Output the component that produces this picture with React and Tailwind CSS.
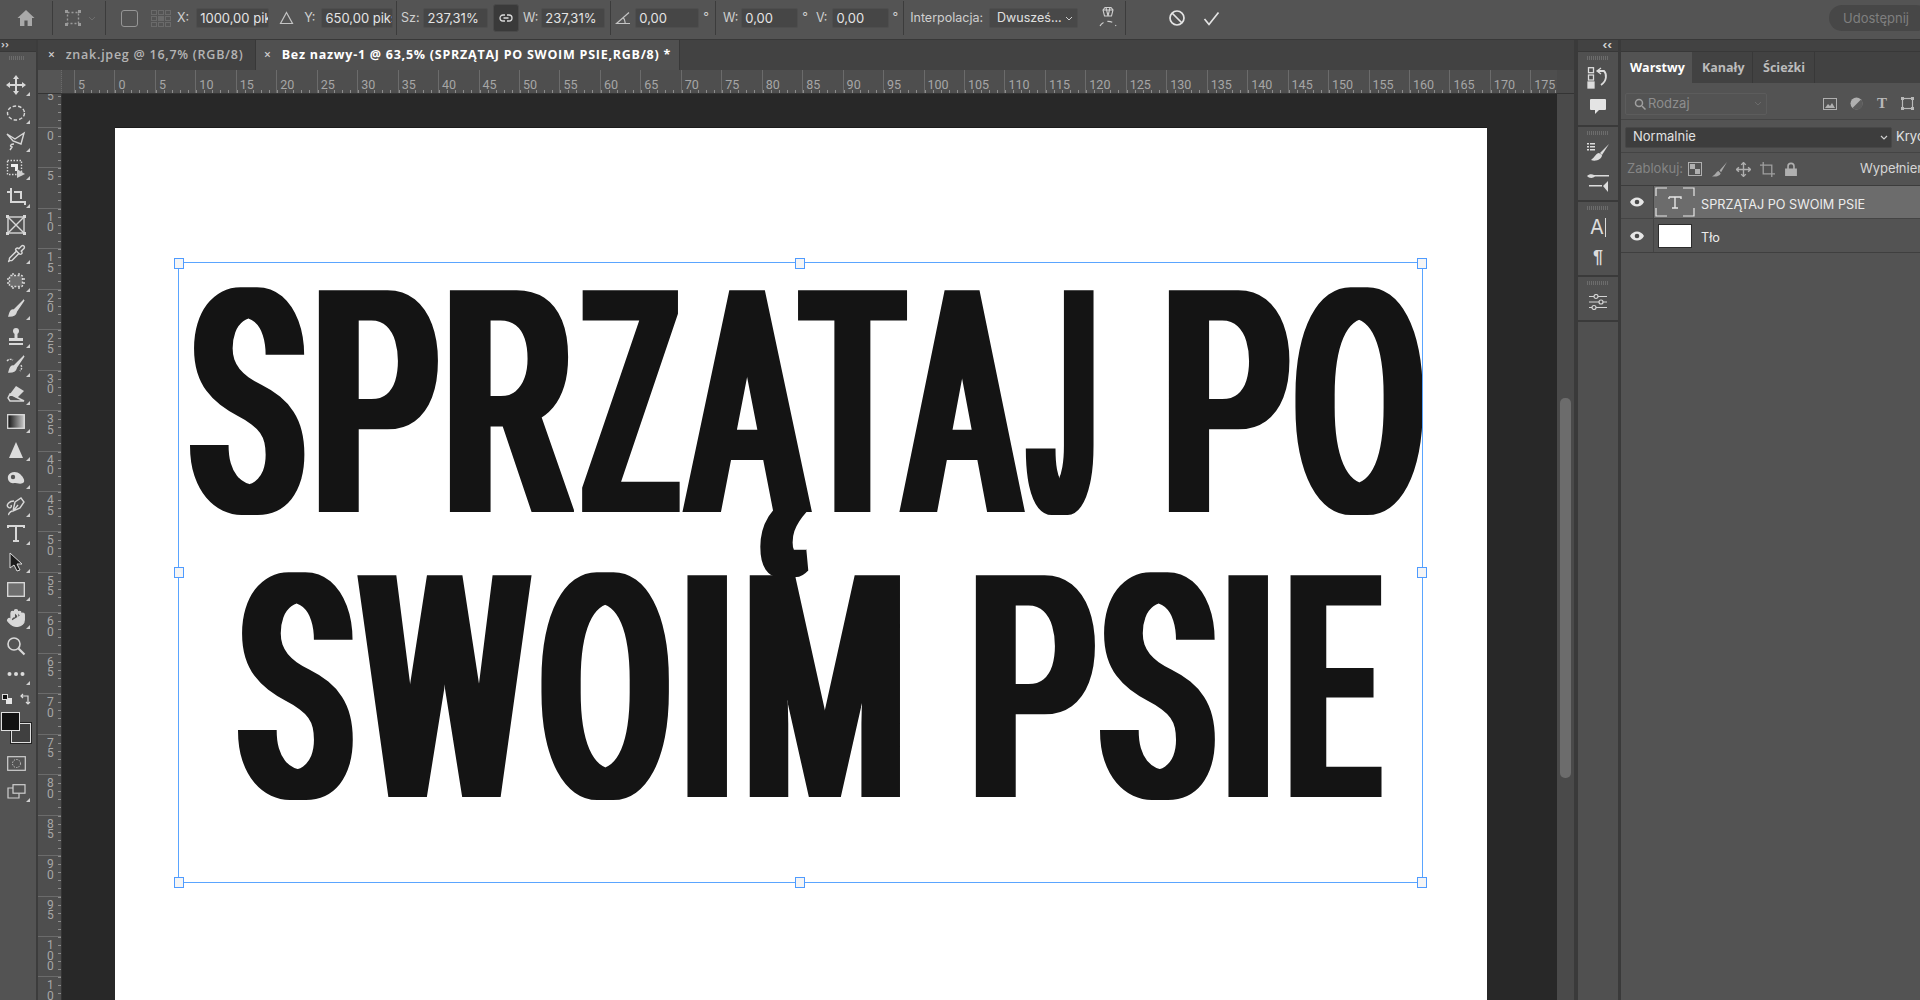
import React from 'react';
import { Hand, Pipette } from 'lucide-react';

const UI = "font-['Inter','Liberation_Sans',sans-serif]";
const C = '#d8d8d8';
const R = 8;

const measure = (() => {
  const ctx = document.createElement('canvas').getContext('2d');
  ctx.font = "500 312px Roboto";
  return (ch) => {
    const m = ctx.measureText(ch);
    return { l: -m.actualBoundingBoxLeft, r: m.actualBoundingBoxRight };
  };
})();

const LINE1 = [['S',189,306],['P',316.5,439],['R',448,574],['Z',581,681],['Ą',681,812,'A'],['T',797,908],['A',898,1025],['J',1025,1095],[' ',1095,1167],['P',1167,1291],['O',1295,1423]];
const LINE2 = [['S',236.6,354],['W',356,534],['O',541.5,669.6],['I',687,727],['M',748,902],[' ',902,974.5],['P',974.5,1097],['S',1099.5,1217],['I',1228,1268],['E',1289,1383]];

function BigLine({ items }) {
  let prev = 115;
  return (
    <div className="flex h-[285px] font-['Roboto',sans-serif] font-medium text-[312px] leading-[285px] text-[#141414] [filter:url(#hfat)]">
      {items.map(([ch, l, r, mc], i) => {
        const ml = l - prev;
        prev = r;
        if (ch === ' ') return <span key={i} className="shrink-0 overflow-hidden whitespace-pre" style={{ width: r - l, marginLeft: ml }}> </span>;
        const m = measure(mc || ch);
        const s = (r - l - 2 * R) / (m.r - m.l);
        return (
          <span key={i} className="shrink-0" style={{ width: r - l, marginLeft: ml }}>
            <span className="inline-block origin-left whitespace-pre" style={{ transform: `translateX(${R}px) scaleX(${s}) translateX(${-m.l}px)` }}>{ch}</span>
          </span>
        );
      })}
    </div>
  );
}

const Svg = ({ s = 20, w, h, children, className = '' }) => (
  <svg width={w || s} height={h || s} viewBox={`0 0 ${w || s} ${h || s}`} fill="none" stroke={C} strokeWidth="1.4" className={className}>{children}</svg>
);

const Sep = ({ cls }) => <div className={`w-px h-[34px] bg-[#3c3c3c] shrink-0 ${cls}`} />;

const Field = ({ w, children }) => (
  <div className={`${w} h-[20px] shrink-0 bg-[#464646] border border-[#4e4e4e] rounded-[2px] pl-[3px] text-[13px] leading-[18px] text-[#e4e4e4] overflow-hidden whitespace-nowrap`}>{children}</div>
);
const Lab = ({ cls = '', children }) => <span className={`text-[12.5px] text-[#cfcfcf] whitespace-nowrap shrink-0 ${cls}`}>{children}</span>;

function TopBar() {
  return (
    <div className="h-[40px] shrink-0 bg-[#545454] border-b border-[#383838] flex items-center relative pb-[3px]">
      <div className="w-[52px] flex justify-center shrink-0">
        <svg width="20" height="20" viewBox="0 0 20 20" fill="#a9a9a9"><path d="M10 2 1.5 10H4v8h4.4v-5.5h3.2V18H16v-8h2.500z" /></svg>
      </div>
      <Sep />
      <div className="w-[52px] flex items-center justify-center gap-[6px] shrink-0 pl-[2px]">
        <Svg s={18}><rect x="3.500" y="3.500" width="11" height="11" strokeDasharray="2 2" stroke="#9a9a9a" /><path d="M1 1h3v3H1zM14 1h3v3h-3zM1 14h3v3H1zM14 14h3v3h-3z" fill="#9a9a9a" stroke="none" /></Svg>
        <svg width="8" height="5" viewBox="0 0 8 5" fill="none" stroke="#6e6e6e"><path d="m1 1 3 3 3-3" /></svg>
      </div>
      <Sep />
      <div className="ml-[15px] w-[17px] h-[17px] border border-[#969696] rounded-[3px] shrink-0" />
      <div className="ml-[13px] grid grid-cols-3 gap-[1px] shrink-0">
        {[...Array(9)].map((_, i) => <span key={i} className={`w-[6px] h-[5px] border border-[#6a6a6a] ${i === 4 ? 'bg-[#6a6a6a]' : ''}`} />)}
      </div>
      <Lab cls="ml-[6px]">X:</Lab>
      <div className="ml-[7px]"><Field w="w-[73px]">1000,00 pik</Field></div>
      <svg className="ml-[10px] shrink-0" width="15" height="14" viewBox="0 0 15 14" fill="none" stroke="#c4c4c4" strokeWidth="1.200"><path d="M7.500 1.500 13.500 12.500h-12z" /></svg>
      <Lab cls="ml-[10px]">Y:</Lab>
      <div className="ml-[6px]"><Field w="w-[72px]">650,00 piks</Field></div>
      <Sep cls="ml-[3px]" />
      <Lab cls="ml-[3.500px]">Sz:</Lab>
      <div className="ml-[4px]"><Field w="w-[65px]">237,31%</Field></div>
      <div className="ml-[5px] w-[26px] h-[28px] shrink-0 bg-[#3a3a3a] border border-[#4a4a4a] rounded-[3px] flex items-center justify-center">
        <svg width="14" height="8" viewBox="0 0 14 8" fill="none" stroke="#dcdcdc" strokeWidth="1.300"><path d="M6 1H4a3 3 0 0 0 0 6h2M8 1h2a3 3 0 0 1 0 6H8M4.500 4h5" /></svg>
      </div>
      <Lab cls="ml-[3.500px]">W:</Lab>
      <div className="ml-[3px]"><Field w="w-[64px]">237,31%</Field></div>
      <Sep cls="ml-[5px]" />
      <svg className="ml-[4px] shrink-0" width="16" height="14" viewBox="0 0 16 14" fill="none" stroke="#c4c4c4" strokeWidth="1.200"><path d="M14 1.500 1.500 12.500H15M8 6.500a7 7 0 0 1 2 6" /></svg>
      <div className="ml-[4px]"><Field w="w-[64px]">0,00</Field></div>
      <Lab cls="ml-[4px]">°</Lab>
      <Sep cls="ml-[6px]" />
      <Lab cls="ml-[7px]">W:</Lab>
      <div className="ml-[3px]"><Field w="w-[57px]">0,00</Field></div>
      <Lab cls="ml-[4px]">°</Lab>
      <Lab cls="ml-[8px]">V:</Lab>
      <div className="ml-[5px]"><Field w="w-[57px]">0,00</Field></div>
      <Lab cls="ml-[3px]">°</Lab>
      <Sep cls="ml-[5px]" />
      <Lab cls="ml-[6px]">Interpolacja:</Lab>
      <div className="ml-[6px] w-[89px] h-[20px] shrink-0 bg-[#484848] border border-[#4e4e4e] rounded-[2px] pl-[7px] text-[12.5px] leading-[18px] text-[#e0e0e0] flex items-center justify-between pr-[4px]">
        <span>Dwusześ...</span>
        <svg width="8" height="5" viewBox="0 0 8 5" fill="none" stroke="#cfcfcf"><path d="m1 1 3 3 3-3" /></svg>
      </div>
      <svg className="ml-[21px] shrink-0" width="18" height="28" viewBox="0 0 18 28" fill="none" stroke="#cfcfcf" strokeWidth="1.100">
        <path d="M4 6l2-2.500h6L14 6l-1.500 6h-7zM4 6h10M7 3.500 9 12l2-8.500" />
        <path d="M1 22a8.500 7 0 0 1 16 0" strokeDasharray="5 4" />
      </svg>
      <Sep cls="ml-[8px]" />
      <svg className="ml-[42px] shrink-0" width="18" height="18" viewBox="0 0 18 18" fill="none" stroke="#e4e4e4" strokeWidth="1.700"><circle cx="9" cy="9" r="7" /><path d="m4 4 10 10" /></svg>
      <svg className="ml-[17px] shrink-0" width="17" height="15" viewBox="0 0 17 15" fill="none" stroke="#e4e4e4" strokeWidth="1.700"><path d="m1.500 8 4.500 5.500L15.500 1.500" /></svg>
      <div className="absolute left-[1829px] top-[5px] w-[100px] h-[26px] rounded-full bg-[#474747] pl-[14px] text-[13px] leading-[26px] text-[#7f7f7f]">Udostępnij</div>
    </div>
  );
}

const T = ({ children, sub = true }) => (
  <div className="relative h-[28.05px] flex items-center justify-center pr-[4px]">
    {children}
    {sub && <svg className="absolute right-[6px] bottom-[3px]" width="4" height="4" viewBox="0 0 4 4" fill="#cfcfcf"><path d="M4 0v4H0z" /></svg>}
  </div>
);

function Tools() {
  return (
    <div className="w-[38px] shrink-0 bg-[#535353] border-r-2 border-[#3c3c3c] flex flex-col">
      <div className="h-[12px] bg-[#3f3f3f] border-b border-[#383838] text-[#d0d0d0] text-[9px] leading-[10px] pl-[1px] font-bold">››</div>
      <div className="h-[19px] flex justify-center pr-[2px] pt-[4px]"><div className="w-[16px] h-[4px] bg-[repeating-linear-gradient(90deg,#6c6c6c_0,#6c6c6c_1px,transparent_1px,transparent_2px)]" /></div>
      <T><Svg><path d="M10 2v16M2 10h16" strokeWidth="2" /><path d="M10 0 7 4h6zM10 20l-3-4h6zM0 10l4-3v6zM20 10l-4-3v6z" fill={C} stroke="none" /></Svg></T>
      <T><Svg><ellipse cx="10" cy="10" rx="8.500" ry="7" strokeDasharray="3.500 2" /></Svg></T>
      <T><Svg><path d="M1 3 9 8l9-6-3 11-8-3L1 3Z" /><path d="M8 13c-3 0-5 2-2 3l-2 3" /></Svg></T>
      <T><Svg><rect x="1.500" y="1.500" width="14" height="14" strokeDasharray="1.500 1.500" /><path d="M5 5h7v7H9V8H5z" fill="#eee" stroke="none" /><path d="m11 10 8 5-8 4z" fill="#cfcfcf" stroke="none" /></Svg></T>
      <T><Svg><path d="M5 1v14h14v3M1 5h4M8 5h7v7" strokeWidth="2" /></Svg></T>
      <T sub={false}><Svg><rect x="2" y="2" width="16" height="16" /><path d="m2 2 16 16M18 2 2 18" /><path d="M0 0h3v3H0zM17 0h3v3h-3zM0 17h3v3H0zM17 17h3v3h-3z" fill={C} stroke="none" /></Svg></T>
      <T><Pipette size={19} color={C} strokeWidth={1.800} /></T>
      <T><Svg><rect x="3.500" y="4.500" width="13" height="11" rx="1" fill="#6d6d6d" strokeDasharray="2 1.500" /><path d="M1 8h2M1 12h2M17 8h2M17 12h2M7 2v2M13 2v2M7 16v2M13 16v2" /></Svg></T>
      <T><Svg><path d="M18 1 8 11l2 2L18 1Z" fill={C} /><path d="M7 11c-3 0-3 3-4 6 3 0 7-1 7-4z" fill={C} /></Svg></T>
      <T><Svg><circle cx="10" cy="4" r="3" fill={C} stroke="none" /><path d="M8.500 6h3v5h-3z" fill={C} stroke="none" /><path d="M3 11h14v3H3zM3 16h14v2H3z" fill={C} stroke="none" /></Svg></T>
      <T><Svg><path d="M18 1 8 11l2 2L18 1Z" fill={C} /><path d="M7 11c-3 0-3 3-4 6 3 0 7-1 7-4z" fill={C} /><path d="M1 6c2-2 4-2 6-1M15 10c1 2 1 4-1 6" strokeDasharray="2 1" /></Svg></T>
      <T><Svg><path d="m10 2 8 5-7 7-7-4z" fill={C} stroke="none" /><path d="m4 10 6 3 8 4H4l-2-3z" /></Svg></T>
      <T><svg width="18" height="15" viewBox="0 0 18 15"><defs><linearGradient id="g"><stop offset="0" stopColor="#111" /><stop offset="1" stopColor="#ccc" /></linearGradient></defs><rect x=".7" y=".7" width="16.600" height="13.600" fill="url(#g)" stroke="#ddd" strokeWidth="1.300" /></svg></T>
      <T><svg width="16" height="16" viewBox="0 0 16 16" fill="#dcdcdc"><path d="M8 0 15 16H1z" /></svg></T>
      <T><svg width="18" height="14" viewBox="0 0 18 14"><path d="M1 5c2-5 9-5 12-2 2 2 5 5 4 8-2 3-7 1-10 1-3 1-7-2-6-7Z" fill="#dcdcdc" /><circle cx="6" cy="6" r="2.200" fill="#545454" /></svg></T>
      <T><Svg><path d="M9 6 15 2l3 4-4 6-7 3zM8 14l4-5" /><path d="M8 5C3 5 0 9 2 11c2 2 4 0 3-2M6 15c-2 1-4 3-3 4" /></Svg></T>
      <T><svg width="18" height="17" viewBox="0 0 18 17" fill="none" stroke={C} strokeWidth="2"><path d="M1 3V1h16v2M9 1v15M6 16h6" /></svg></T>
      <T><svg width="16" height="20" viewBox="0 0 16 20"><path d="M2 1v15l4-3 3 6 3-1-3-6h5z" fill="#1c1c1c" stroke="#dcdcdc" strokeWidth="1" /></svg></T>
      <T><svg width="18" height="15" viewBox="0 0 18 15"><rect x=".7" y=".7" width="16.600" height="13.600" fill="#6e6e6e" stroke="#ddd" strokeWidth="1.300" /></svg></T>
      <T sub><Hand size={20} color={C} fill={C} strokeWidth={1.500} /></T>
      <T sub={false}><Svg><circle cx="8" cy="8" r="6" strokeWidth="1.600" /><path d="m12.500 12.500 6 6" strokeWidth="2.200" /></Svg></T>
      <T><svg width="18" height="4" viewBox="0 0 18 4" fill="#dcdcdc"><circle cx="2.500" cy="2" r="2" /><circle cx="9" cy="2" r="2" /><circle cx="15.500" cy="2" r="2" /></svg></T>
      <div className="h-[18px] flex items-center justify-between pl-[2px] pr-[5px] mt-[2px]">
        <svg width="10" height="10" viewBox="0 0 10 10"><rect x="4" y="4" width="6" height="6" fill="#e6e6e6" /><rect x=".5" y=".5" width="5" height="5" fill="#111" stroke="#ddd" /></svg>
        <svg width="12" height="12" viewBox="0 0 12 12" fill="none" stroke="#ddd" strokeWidth="1.200"><path d="M9 11V3H2M4 1 2 3l2 2M7 9l2 2 2-2" /></svg>
      </div>
      <div className="relative h-[34px] ml-[1px] mt-[4px] shrink-0">
        <div className="absolute left-[10px] top-[11px] w-[20px] h-[20px] bg-[#404040] border border-[#e0e0e0] outline outline-[#222]" />
        <div className="absolute left-0 top-0 w-[19px] h-[19px] bg-[#111] border border-[#e0e0e0]" />
      </div>
      <div className="mt-[3px] h-[28px] flex items-center justify-center pr-[4px]">
        <svg width="19" height="15" viewBox="0 0 19 15" fill="none" stroke="#cfcfcf"><rect x=".7" y=".7" width="17.600" height="13.600" strokeWidth="1.200" /><circle cx="9.500" cy="7.500" r="4" strokeDasharray="1.300 1.300" /></svg>
      </div>
      <T><svg width="19" height="15" viewBox="0 0 19 15" fill="none" stroke="#cfcfcf" strokeWidth="1.200"><rect x="6" y=".7" width="12" height="8.500" /><path d="M6 4H1v10h11V9.500" /></svg></T>
    </div>
  );
}

function Tabs() {
  return (
    <div className="h-[30px] shrink-0 bg-[#424242] flex font-['Open_Sans',sans-serif] text-[12.5px] font-semibold tracking-[0.75px]">
      <div className="w-[218px] flex items-center pl-[10px] gap-[10px] text-[#b4b4b4] border-r border-[#383838]">
        <span className="text-[12px] text-[#cfcfcf]">×</span><span className="whitespace-nowrap">znak.jpeg @ 16,7% (RGB/8)</span>
      </div>
      <div className="w-[424px] bg-[#505050] flex items-center pl-[8px] gap-[10px] text-white border-r border-[#383838]">
        <span className="text-[12px] text-[#cfcfcf]">×</span><span className="whitespace-nowrap font-bold">Bez nazwy-1 @ 63,5% (SPRZĄTAJ PO SWOIM PSIE,RGB/8) *</span>
      </div>
    </div>
  );
}

const MINOR_X = "bg-[repeating-linear-gradient(90deg,#8c8c8c_0,#8c8c8c_1px,transparent_1px,transparent_8.09px)] bg-[length:100%_3px] bg-bottom bg-no-repeat";
const MINOR_Y = "bg-[repeating-linear-gradient(180deg,#8c8c8c_0,#8c8c8c_1px,transparent_1px,transparent_8.09px)] bg-[length:3px_100%] bg-right bg-no-repeat";

function RulerTop() {
  const vals = [-1, ...Array.from({ length: 36 }, (_, i) => i)];
  return (
    <div className="h-[24px] shrink-0 flex border-b border-[#343434] font-['Roboto',sans-serif] text-[12.5px] text-[#a6a6a6]">
      <div className="w-[24px] shrink-0 bg-[#555] border-r border-dotted border-[#6a6a6a]" />
      <div className="flex-1 flex bg-[#4e4e4e] overflow-hidden">
        <div className="w-[12px] shrink-0" />
        {vals.map((n) => (
          <div key={n} className={`w-[40.46px] shrink-0 border-l border-[#6b6b6b] pl-[3px] leading-[29px] ${MINOR_X}`}>{Math.abs(n) * 5}</div>
        ))}
      </div>
      <div className="w-[17px] shrink-0 bg-[#4a4a4a]" />
    </div>
  );
}

function RulerLeft() {
  const vals = Array.from({ length: 23 }, (_, i) => i - 1);
  return (
    <div className="w-[24px] shrink-0 bg-[#4e4e4e] overflow-hidden font-['Roboto',sans-serif] text-[12px] leading-[10.500px] text-[#a6a6a6] border-r border-[#343434]">
      <div className="-mt-[7.500px]">
        {vals.map((n) => (
          <div key={n} className={`h-[40.46px] border-t border-[#6b6b6b] pl-[9px] pt-[3px] ${MINOR_Y}`}>
            {String(Math.abs(n) * 5).split('').map((d, i) => <div key={i}>{d}</div>)}
          </div>
        ))}
      </div>
    </div>
  );
}

const Handle = ({ cls }) => <div className={`absolute w-[10px] h-[11px] -ml-[5px] -mt-[5.500px] bg-[#f5f5f5] border-[1.500px] border-[#4f9bff] ${cls}`} />;

function Canvas() {
  return (
    <div className="flex-1 flex min-h-0">
      <RulerLeft />
      <div className="flex-1 bg-[#282828] overflow-hidden pl-[53px] pt-[33px]">
        <div className="relative w-[1372px] h-[900px] bg-white pt-[134.500px] border-t border-[#1c1c1c]">
          <BigLine items={LINE1} />
          <BigLine items={LINE2} />
          <div className="absolute left-[62.500px] top-[134px] w-[1245px] h-[621px] border-[1.500px] border-[#5aa5ff]">
            <Handle cls="left-0 top-0" />
            <Handle cls="left-1/2 top-0" />
            <Handle cls="left-full top-0" />
            <Handle cls="left-0 top-1/2" />
            <Handle cls="left-full top-1/2" />
            <Handle cls="left-0 top-full" />
            <Handle cls="left-1/2 top-full" />
            <Handle cls="left-full top-full" />
          </div>
        </div>
      </div>
      <div className="w-[17px] shrink-0 bg-[#4a4a4a] pl-[3px] pt-[304px]">
        <div className="w-[11px] h-[380px] bg-[#6c6c6c] rounded-[5px]" />
      </div>
    </div>
  );
}

const Grip = () => <div className="h-[11px] flex justify-center pt-[4px]"><div className="w-[22px] h-[4px] bg-[repeating-linear-gradient(90deg,#6c6c6c_0,#6c6c6c_1px,transparent_1px,transparent_2px)]" /></div>;

function Strip() {
  const Group = ({ h, children }) => (
    <div className={`${h} shrink-0 bg-[#505050] border-b-2 border-[#3a3a3a] flex flex-col items-center`}>
      <Grip />
      {children}
    </div>
  );
  return (
    <div className="w-[44px] shrink-0 flex flex-col bg-[#3e3e3e] border-l-4 border-[#3a3a3a]">
      <div className="h-[12px] bg-[#424242] border-b border-[#383838] text-right pr-[6px] text-[11px] leading-[11px] font-bold text-[#d4d4d4]">‹‹</div>
      <Group h="h-[75px]">
        <div className="h-[29px] flex items-center">
          <svg width="22" height="22" viewBox="0 0 22 22" fill="none" stroke="#dcdcdc" strokeWidth="1.300"><rect x="1.500" y=".7" width="5" height="5" /><rect x="1.500" y="8" width="5" height="5" /><rect x="1" y="15" width="6" height="6" fill="#dcdcdc" /><path d="M11 4h6c3 3 3 10-3 14" strokeWidth="1.800" /><path d="m14 1-4 3 4 3" /></svg>
        </div>
        <div className="h-[25px] flex items-center mt-[2px]">
          <svg width="16" height="16" viewBox="0 0 16 16" fill="#e4e4e4"><path d="M1 0h14a1 1 0 0 1 1 1v9a1 1 0 0 1-1 1H9l-4 4v-4H1a1 1 0 0 1-1-1V1a1 1 0 0 1 1-1Z" /></svg>
        </div>
      </Group>
      <Group h="h-[75px]">
        <div className="h-[28px] flex items-center">
          <svg width="23" height="20" viewBox="0 0 23 20" fill="#dcdcdc"><path d="M0 1h2v1.500H0zM3 1h5v1.500H3zM0 4h2v1.500H0zM3 4h5v1.500H3zM0 7h2v1.500H0zM3 7h5v1.500H3z" /><path d="m22 2-9 9 2 2 7-11Z" /><path d="M12 11c-3 0-4 4-8 7 5 2 11-1 11-5z" /></svg>
        </div>
        <div className="h-[28px] flex items-center mt-[3px]">
          <svg width="22" height="20" viewBox="0 0 22 20" fill="#dcdcdc"><path d="M0 3c2-2 5-2 7-1h15v1.500H8c-2 2-6 2-8-.5ZM2 12h13v1.500H2zM16 13l5-5v11z" /></svg>
        </div>
      </Group>
      <Group h="h-[75px]">
        <div className="h-[28px] flex items-center font-['Inter',sans-serif] text-[20px] text-[#dcdcdc] leading-none">A<span className="w-px h-[19px] bg-[#dcdcdc] ml-[1px]" /></div>
        <div className="h-[28px] flex items-center mt-[2px] font-['Liberation_Sans',sans-serif] font-bold text-[18px] text-[#dcdcdc] leading-none">¶</div>
      </Group>
      <Group h="h-[45px]">
        <div className="h-[28px] flex items-center">
          <svg width="20" height="16" viewBox="0 0 20 16" fill="none" stroke="#d4d4d4" strokeWidth="1.200"><path d="M1 2.500h5M10 2.500h9M1 8h10M15 8h4M1 13.500h3M8 13.500h11" /><circle cx="8" cy="2.500" r="2" /><circle cx="13" cy="8" r="2" /><circle cx="6" cy="13.500" r="2" /></svg>
        </div>
      </Group>
      <div className="flex-1 bg-[#505050]" />
    </div>
  );
}

const Eye = () => (
  <svg width="14" height="10" viewBox="0 0 14 10"><path d="M0 5c3-6 11-6 14 0-3 6-11 6-14 0Z" fill="#e6e6e6" /><circle cx="7" cy="5" r="2.300" fill="#4a4a4a" /></svg>
);

function LockIcon({ children }) {
  return <div className="w-[24px] shrink-0 flex justify-center">{children}</div>;
}

function LayersPanel() {
  return (
    <div className="flex-1 min-w-0 bg-[#535353] border-l-[3px] border-[#3a3a3a] flex flex-col overflow-hidden whitespace-nowrap">
      <div className="h-[12px] bg-[#424242] border-b border-[#383838] -ml-[3px]" />
      <div className="h-[31px] bg-[#424242] flex font-['Open_Sans',sans-serif] text-[12.5px] font-bold">
        <div className="w-[71px] bg-[#535353] pl-[9px] leading-[31px] text-white">Warstwy</div>
        <div className="w-[61px] pl-[10px] leading-[31px] text-[#bcbcbc] border-r border-[#383838]">Kanały</div>
        <div className="w-[62px] pl-[10px] leading-[31px] text-[#bcbcbc] border-r border-[#383838]">Ścieżki</div>
      </div>
      <div className="h-[37px] shrink-0 border-b border-[#444] flex items-center pl-[4px] pt-[5px]">
        <div className="w-[142px] h-[22px] shrink-0 border border-[#5c5c5c] rounded-[2px] flex items-center pl-[8px] text-[13px] text-[#8e8e8e]">
          <svg width="12" height="12" viewBox="0 0 12 12" fill="none" stroke="#a0a0a0" strokeWidth="1.500"><circle cx="5" cy="5" r="3.500" /><path d="m8 8 3.500 3.500" /></svg>
          <span className="ml-[2px]">Rodzaj</span>
          <svg className="ml-auto mr-[4px]" width="8" height="5" viewBox="0 0 8 5" fill="none" stroke="#6a6a6a"><path d="m1 1 3 3 3-3" /></svg>
        </div>
        <svg className="ml-[56px] shrink-0" width="14" height="12" viewBox="0 0 14 12" fill="none" stroke="#b0b0b0"><rect x=".5" y=".5" width="13" height="11" /><path d="m2 10 3-4 2 2 2-3 3 5z" fill="#b0b0b0" stroke="none" /></svg>
        <svg className="ml-[13px] shrink-0" width="13" height="13" viewBox="0 0 13 13"><circle cx="6.500" cy="6.500" r="6" fill="#b0b0b0" /><path d="M11 2.500a6 6 0 0 1-8.500 8.500L11 2.500Z" fill="#5c5c5c" /></svg>
        <span className="ml-[14px] font-['Liberation_Serif',serif] font-bold text-[15px] leading-none text-[#b8b8b8]">T</span>
        <svg className="ml-[14px] shrink-0" width="13" height="13" viewBox="0 0 13 13" fill="none" stroke="#b8b8b8" strokeWidth="1.200"><rect x="1.500" y="1.500" width="10" height="10" /><path d="M0 0h3v3H0zM10 0h3v3h-3zM0 10h3v3H0zM10 10h3v3h-3z" fill="#b8b8b8" stroke="none" /></svg>
      </div>
      <div className="h-[33px] shrink-0 border-b border-[#444] flex items-center pl-[4px] text-[13px] text-[#e2e2e2] pt-[2px]">
        <div className="w-[267px] shrink-0 h-[21px] bg-[#3d3d3d] border border-[#474747] rounded-[2px] flex items-center pl-[7px] justify-between pr-[3px]">
          Normalnie
          <svg width="8" height="5" viewBox="0 0 8 5" fill="none" stroke="#d0d0d0" strokeWidth="1.200"><path d="m1 1 3 3 3-3" /></svg>
        </div>
        <span className="ml-[4px]">Krycie:</span>
      </div>
      <div className="h-[33px] shrink-0 border-b border-[#3c3c3c] flex items-center pl-[6px] text-[13px] text-[#858585]">
        <span className="w-[56px] shrink-0">Zablokuj:</span>
        <LockIcon><svg width="14" height="14" viewBox="0 0 14 14"><rect x=".5" y=".5" width="13" height="13" fill="none" stroke="#b0b0b0" /><path d="M2 2h5v5H2zM7 7h5v5H7z" fill="#b0b0b0" /></svg></LockIcon>
        <LockIcon><svg width="15" height="15" viewBox="0 0 14 14" fill="#a8a8a8"><path d="m14 0-7 8 1.500 1.500L14 0ZM6 8.500c-2 .5-2 3-6 5 3 .5 8-.5 8-3z" /></svg></LockIcon>
        <LockIcon><svg width="15" height="15" viewBox="0 0 13 13" fill="none" stroke="#b0b0b0" strokeWidth="1.200"><path d="M6.500 0v13M0 6.500h13M4.500 2.500l2-2 2 2M4.500 10.500l2 2 2-2M2.500 4.500l-2 2 2 2M10.500 4.500l2 2-2 2" /></svg></LockIcon>
        <LockIcon><svg width="15" height="15" viewBox="0 0 14 14" fill="none" stroke="#a0a0a0" strokeWidth="1.200"><path d="M3 0v11h11M0 3h11v11" /></svg></LockIcon>
        <LockIcon><svg width="12" height="14" viewBox="0 0 11 13" fill="#b0b0b0"><path d="M2 6V4a3.500 3.500 0 0 1 7 0v2h2v7H0V6zm1.500 0h4V4a2 2 0 0 0-4 0z" /></svg></LockIcon>
        <span className="ml-[57px] text-[#d6d6d6]">Wypełnienie:</span>
      </div>
      <div className="h-[33px] shrink-0 flex border-b border-[#444] text-[12.7px] text-[#ececec]">
        <div className="w-[33px] flex items-center justify-center border-r border-[#444]"><Eye /></div>
        <div className="flex-1 bg-[#6c6c6c] flex items-center">
          <svg className="ml-[1px]" width="40" height="30" viewBox="0 0 40 30" fill="none" stroke="#e6e6e6" strokeWidth="1.200">
            <path d="M1 9V1h11M28 1h11v8M1 21v8h11M28 29h11v-8" />
            <path d="M14 10h12v2M14 12v-2M20 10v11M17 21h6" strokeWidth="1.400" />
          </svg>
          <span className="ml-[6px] pt-[5px]">SPRZĄTAJ PO SWOIM PSIE</span>
        </div>
      </div>
      <div className="h-[34px] shrink-0 flex border-b border-[#3f3f3f] text-[12.7px] text-[#ececec]">
        <div className="w-[33px] flex items-center justify-center border-r border-[#444]"><Eye /></div>
        <div className="flex-1 flex items-center pl-[4px]">
          <div className="w-[34px] h-[24px] bg-white border border-[#2c2c2c]" />
          <span className="ml-[9px] pt-[5px]">Tło</span>
        </div>
      </div>
    </div>
  );
}

export default function App() {
  return (
    <div className={`w-[1920px] h-[1000px] overflow-hidden bg-[#535353] flex flex-col ${UI}`}>
      <svg className="absolute w-0 h-0">
        <filter id="hfat" x="-5%" y="-30%" width="110%" height="170%" colorInterpolationFilters="sRGB">
          <feMorphology operator="dilate" radius={`${R} 0`} />
        </filter>
      </svg>
      <TopBar />
      <div className="flex-1 flex min-h-0">
        <Tools />
        <div className="w-[1536px] shrink-0 flex flex-col min-h-0">
          <Tabs />
          <RulerTop />
          <Canvas />
        </div>
        <Strip />
        <LayersPanel />
      </div>
    </div>
  );
}
